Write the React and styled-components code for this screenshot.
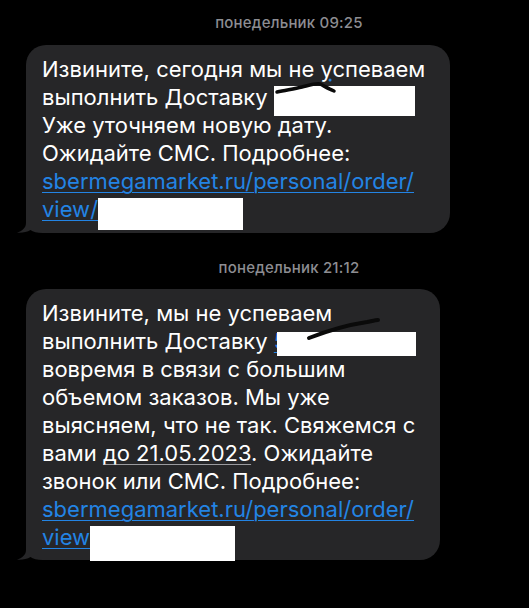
import React from "react";
import styled, { createGlobalStyle } from "styled-components";

const Global = createGlobalStyle`
  html, body { margin: 0; padding: 0; background: #000; }
  body { font-family: Inter, "Noto Sans", sans-serif; }
`;

const Page = styled.div`
  width: 529px;
  height: 608px;
  background: #000;
  padding-top: 15px;
  box-sizing: border-box;
  overflow: hidden;
`;

const Stamp = styled.div`
  padding-left: 49px;
  text-align: center;
  color: #8d8d92;
  font-size: 15px;
  font-weight: 500;
  line-height: 16px;
  letter-spacing: 0.2px;
  margin-top: ${(p) => p.$top || 0}px;
  margin-bottom: ${(p) => p.$bottom || 0}px;
`;

const Row = styled.div`
  display: flex;
  padding-left: 26px;
`;

const Bubble = styled.div`
  position: relative;
  isolation: isolate;
  width: ${(p) => p.$w}px;
  box-sizing: border-box;
  background: #262628;
  border-radius: 20px;
  padding: 10px 0 9px 16px;
  color: #fff;
  font-size: 22px;
  line-height: 28.1px;
  white-space: nowrap;
`;

const Tail = styled.svg`
  position: absolute;
  z-index: -1;
  left: -9px;
  bottom: 0;
  width: 40px;
  height: 24px;
`;

const Link = styled.span`
  color: #2384e4;
  text-decoration: underline;
  text-decoration-thickness: 1px;
  text-underline-offset: 3px;
`;

const DateMark = styled.span`
  text-decoration: underline;
  text-decoration-color: #9a9a9e;
  text-decoration-thickness: 1px;
  text-underline-offset: 3px;
`;

const Redact = styled.span`
  position: relative;
  display: inline-block;
  vertical-align: baseline;
  background: #fff;
  width: ${(p) => p.$w}px;
  height: ${(p) => p.$h}px;
  margin-bottom: -${(p) => p.$below}px;
  margin-left: ${(p) => p.$ml || 0}px;
`;

const Scribble = styled.svg`
  position: absolute;
  left: 0;
  top: -14px;
  width: 120px;
  height: 30px;
  overflow: visible;
`;

function Tailpiece() {
  return (
    <Tail viewBox="0 0 40 24">
      <path
        d="M9 0 L9 14 C9 19 5 22 0 23.7 C5 24.2 10 23 13.5 21 C16 22.8 20 24 26 24 L40 24 L40 0 Z"
        fill="#262628"
      />
    </Tail>
  );
}

export default function App() {
  return (
    <Page>
      <Global />
      <Stamp $bottom={14}>понедельник 09:25</Stamp>
      <Row>
        <Bubble $w={424}>
          Извините, сегодня мы не успеваем
          <br />
          выполнить Доставку{" "}
          <Redact $w={141} $h={30} $below={11}>
            <Scribble viewBox="0 -14 120 30">
              <path
                d="M3 6 C12 4 20 3 28 1 C36 -1 42 -3 46 -2 C50 0 55 3 60 5"
                fill="none"
                stroke="#0a0a0a"
                strokeWidth="3.5"
                strokeLinecap="round"
              />
              <circle cx="56" cy="-6" r="1.5" fill="#2384e4" />
            </Scribble>
          </Redact>
          <br />
          Уже уточняем новую дату.
          <br />
          Ожидайте СМС. Подробнее:
          <br />
          <Link>sbermegamarket.ru/personal/order/</Link>
          <br />
          <Link>view/</Link>
          <Redact $w={145} $h={32} $below={13} />
          <Tailpiece />
        </Bubble>
      </Row>
      <Stamp $top={27} $bottom={13}>
        понедельник 21:12
      </Stamp>
      <Row>
        <Bubble $w={414}>
          Извините, мы не успеваем
          <br />
          выполнить Доставку <Link>5</Link>
          <Redact $w={139} $h={24} $below={7} $ml={-10}>
            <Scribble viewBox="0 -14 120 30">
              <path
                d="M32 6 C50 -1 70 -7 90 -10 C95 -11 99 -12 101 -12"
                fill="none"
                stroke="#0a0a0a"
                strokeWidth="4"
                strokeLinecap="round"
              />
            </Scribble>
          </Redact>
          <br />
          вовремя в связи с большим
          <br />
          объемом заказов. Мы уже
          <br />
          выясняем, что не так. Свяжемся с
          <br />
          вами <DateMark>до 21.05.2023</DateMark>. Ожидайте
          <br />
          звонок или СМС. Подробнее:
          <br />
          <Link>sbermegamarket.ru/personal/order/</Link>
          <br />
          <Link>view</Link>
          <Redact $w={145} $h={35} $below={16} />
          <Tailpiece />
        </Bubble>
      </Row>
    </Page>
  );
}
